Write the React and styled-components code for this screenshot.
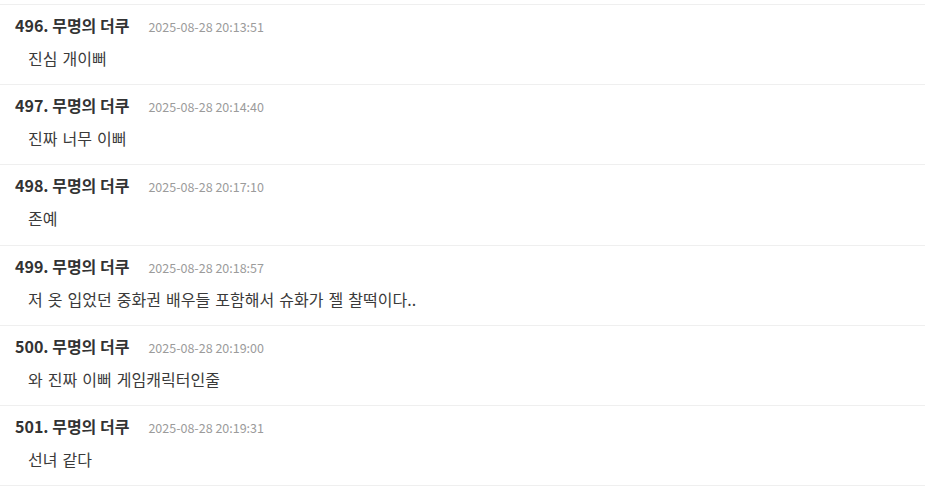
import React from "react";
import styled, { createGlobalStyle } from "styled-components";

const Global = createGlobalStyle`
  html, body { margin: 0; padding: 0; background: #ffffff; }
  body { font-family: "Noto Sans CJK KR", "Noto Sans", sans-serif; }
`;

const Page = styled.div`
  padding-top: 4px;
  width: 925px;
`;

const List = styled.ul`
  list-style: none;
  margin: 0;
  padding: 0;
  border-top: 1px solid #efefef;
`;

const Row = styled.li`
  border-bottom: 1px solid #efefef;
  padding: 11px 15px 15.2px 15px;
  display: flex;
  flex-direction: column;
`;

const Header = styled.div`
  display: flex;
  align-items: baseline;
  gap: 19px;
  height: 18px;
  line-height: 18px;
`;

const Name = styled.span`
  font-size: 16px;
  font-weight: 700;
  color: #333333;
`;

const Time = styled.span`
  font-size: 12.5px;
  color: #9b9b9b;
`;

const Body = styled.div`
  margin-top: 13px;
  padding-left: 13px;
  font-size: 16px;
  word-spacing: 1.5px;
  line-height: 22px;
  color: #3a3a3a;
`;

const comments = [
  { no: 496, time: "2025-08-28 20:13:51", text: "진심 개이뻐" },
  { no: 497, time: "2025-08-28 20:14:40", text: "진짜 너무 이뻐" },
  { no: 498, time: "2025-08-28 20:17:10", text: "존예" },
  { no: 499, time: "2025-08-28 20:18:57", text: "저 옷 입었던 중화권 배우들 포함해서 슈화가 젤 찰떡이다.." },
  { no: 500, time: "2025-08-28 20:19:00", text: "와 진짜 이뻐 게임캐릭터인줄" },
  { no: 501, time: "2025-08-28 20:19:31", text: "선녀 같다" },
];

export default function App() {
  return (
    <>
      <Global />
      <Page>
        <List>
          {comments.map((c) => (
            <Row key={c.no}>
              <Header>
                <Name>{c.no}. 무명의 더쿠</Name>
                <Time>{c.time}</Time>
              </Header>
              <Body>{c.text}</Body>
            </Row>
          ))}
        </List>
      </Page>
    </>
  );
}
